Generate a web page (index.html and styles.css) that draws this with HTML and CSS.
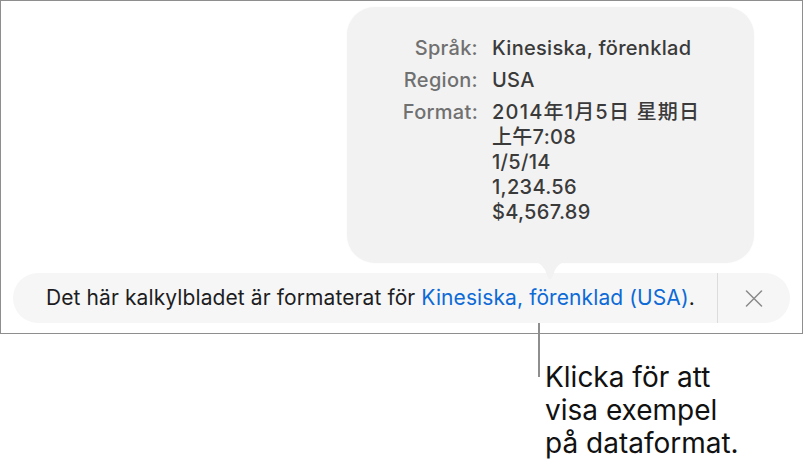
FILE: index.html
```html
<!DOCTYPE html>
<html lang="sv">
<head>
    <meta charset="UTF-8">
    <meta name="viewport" content="width=device-width, initial-scale=1.0">
    <title>Kalkylbladets format</title>
    <link rel="stylesheet" href="styles.css">
</head>
<body>
    <div class="frame">
        <!-- Format preview popover -->
        <div class="popover">
            <div class="format-grid">
                <div class="format-label">Språk:</div>
                <div class="format-value">Kinesiska, förenklad</div>

                <div class="format-label">Region:</div>
                <div class="format-value">USA</div>

                <div class="format-label">Format:</div>
                <div class="format-value">
                    <div class="format-date">2014年1月5日 星期日</div>
                    <div>上午7:08</div>
                    <div>1/5/14</div>
                    <div>1,234.56</div>
                    <div>$4,567.89</div>
                </div>
            </div>
            <svg class="popover-arrow" width="34" height="20" viewBox="0 0 34 20">
                <path d="M0 0 C6 0 9 3 12 8 L15 15.5 Q17 19.5 19 15.5 L22 8 C25 3 28 0 34 0 Z" fill="#f2f2f2"/>
            </svg>
        </div>

        <!-- Locale notice bar -->
        <div class="notice-bar">
            <div class="notice-text">Det här kalkylbladet är formaterat för <a class="notice-link" href="#">Kinesiska, förenklad (USA)</a>.</div>
            <div class="notice-close">
                <svg width="18" height="17" viewBox="0 0 18 17">
                    <path d="M1.5 1 L16.5 16 M16.5 1 L1.5 16" stroke="#8a8a8a" stroke-width="1.5" stroke-linecap="round" fill="none"/>
                </svg>
            </div>
        </div>
    </div>

    <div class="callout">
        <div class="callout-text">
            Klicka för att<br>
            visa exempel<br>
            på dataformat.
        </div>
    </div>
</body>
</html>
```

FILE: styles.css
```css
* {
    margin: 0;
    padding: 0;
    box-sizing: border-box;
}

body {
    font-family: Inter, "Noto Sans CJK SC", sans-serif;
    background-color: white;
    color: #1d1d1f;
    width: 804px;
}

/* Outer frame */
.frame {
    width: 803px;
    height: 334px;
    border: 1px solid #8e8e8e;
    padding-top: 6px;
    display: flex;
    flex-direction: column;
}

/* Popover */
.popover {
    position: relative;
    margin-left: 346px;
    width: 407px;
    height: 256px;
    background-color: #f2f2f2;
    border-radius: 28px;
    box-shadow: 0 0 2px rgba(0, 0, 0, 0.04);
    padding-top: 29px;
    padding-left: 47px;
    z-index: 2;
}

.format-grid {
    display: grid;
    grid-template-columns: 84px auto;
    column-gap: 14px;
    row-gap: 7px;
    font-size: 20px;
    letter-spacing: 0.3px;
    line-height: 25px;
    font-weight: 500;
}

.format-label {
    text-align: right;
    color: #707070;
}

.format-value {
    color: #3a3a3a;
}

.format-date {
    letter-spacing: 1.2px;
}

.popover-arrow {
    position: absolute;
    left: 186px;
    bottom: -19px;
}

/* Notice bar */
.notice-bar {
    margin-top: 10px;
    margin-left: 12px;
    width: 777px;
    height: 50px;
    background-color: #f6f6f6;
    border-radius: 25px;
    display: flex;
}

.notice-text {
    flex: 1;
    line-height: 50px;
    padding-left: 33px;
    font-size: 21px;
    letter-spacing: 0.1px;
    color: #1d1d1f;
    white-space: nowrap;
}

.notice-link {
    color: #0d6ad6;
    text-decoration: none;
}

.notice-close {
    width: 73px;
    border-left: 1px solid #dcdcdc;
    display: flex;
    align-items: center;
    justify-content: center;
}

/* Annotation below the frame */
.callout {
    position: relative;
    padding-top: 27px;
    padding-left: 545px;
}

.callout::before {
    content: "";
    position: absolute;
    left: 538px;
    top: -11px;
    width: 2px;
    height: 54px;
    background-color: #8e8e8e;
}

.callout-text {
    font-size: 28px;
    line-height: 33px;
    color: #111;
}
```
